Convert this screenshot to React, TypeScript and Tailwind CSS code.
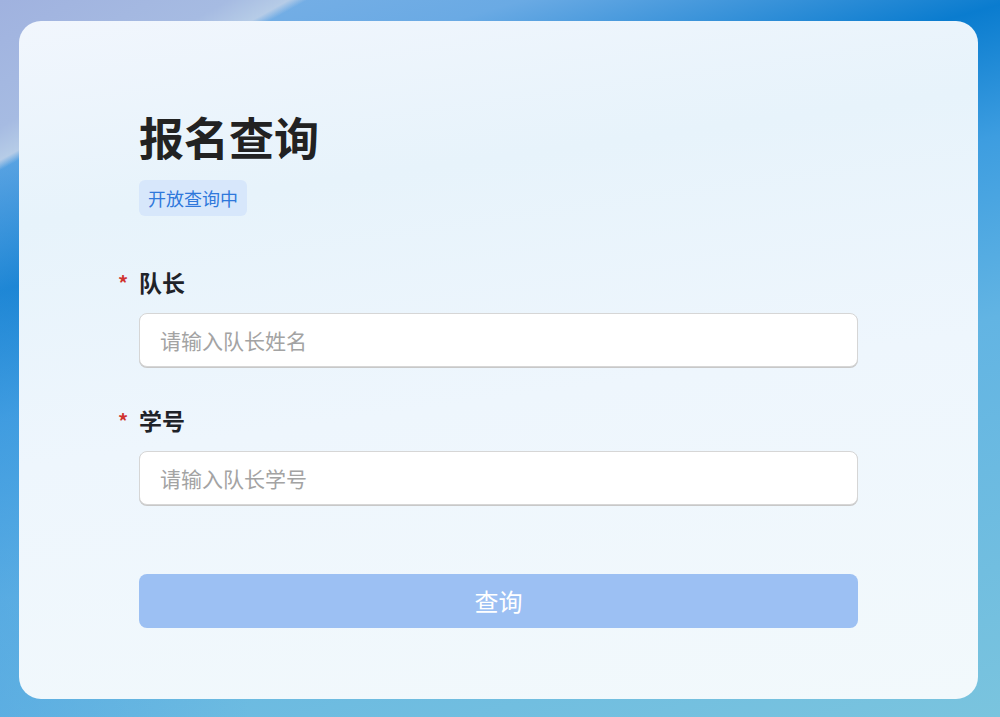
import React from "react";

const FONT = "font-['Noto_Sans_CJK_SC','Noto_Sans',sans-serif]";

function Field({ label, placeholder }: { label: string; placeholder: string }) {
  return (
    <div className="flex flex-col">
      <label className="relative text-[23px] leading-[33px] font-bold text-[#1f2329]">
        <span className="absolute -left-[21px] top-0 text-[20px] text-[#d0332f]">*</span>
        {label}
      </label>
      <input
        placeholder={placeholder}
        className="mt-[14px] h-[54px] w-full rounded-[8px] border border-[#d6d6d6] bg-white px-5 text-[21px] text-[#333] shadow-[0_1px_0_#c8c8c8] outline-none placeholder:text-[#a3a3a3]"
      />
    </div>
  );
}

export default function App() {
  return (
    <div
      className={`${FONT} min-h-[717px] w-full pl-[19px] pr-[22px] pt-[21px] pb-[18px] bg-[linear-gradient(151deg,#a0b2df_0%,#a6bbe2_10%,#b6cce7_12.6%,rgba(182,204,231,0)_13.4%),linear-gradient(90deg,rgba(70,155,225,0.35)_0%,rgba(70,155,225,0)_25%),linear-gradient(164deg,#80b3e7_0%,#6aaae4_15%,#0a7ccf_29%,#3d9de0_42%,#62b4e3_60%,#7ac4de_100%)]`}
    >
      <div className="flex min-h-[678px] flex-col rounded-[22px] bg-[linear-gradient(172deg,#f1f6fd_0%,#e7f3fb_25%,#eef6fd_55%,#f2f9fc_100%)] px-[120px] pt-[89px] pb-[71px]">
        <h1 className="text-[45px] leading-[53px] font-bold text-[#222]">报名查询</h1>
        <div className="mt-[17px]">
          <span className="inline-block rounded-[6px] bg-[#d7e7fb] px-[9px] text-[18px] leading-[36px] text-[#2f78db]">
            开放查询中
          </span>
        </div>

        <div className="mt-[50px] flex flex-col gap-[37px]">
          <Field label="队长" placeholder="请输入队长姓名" />
          <Field label="学号" placeholder="请输入队长学号" />
        </div>

        <button className="mt-[69px] h-[54px] w-full rounded-[8px] bg-[#9cc0f3] text-[24px] text-white">
          查询
        </button>
      </div>
    </div>
  );
}
